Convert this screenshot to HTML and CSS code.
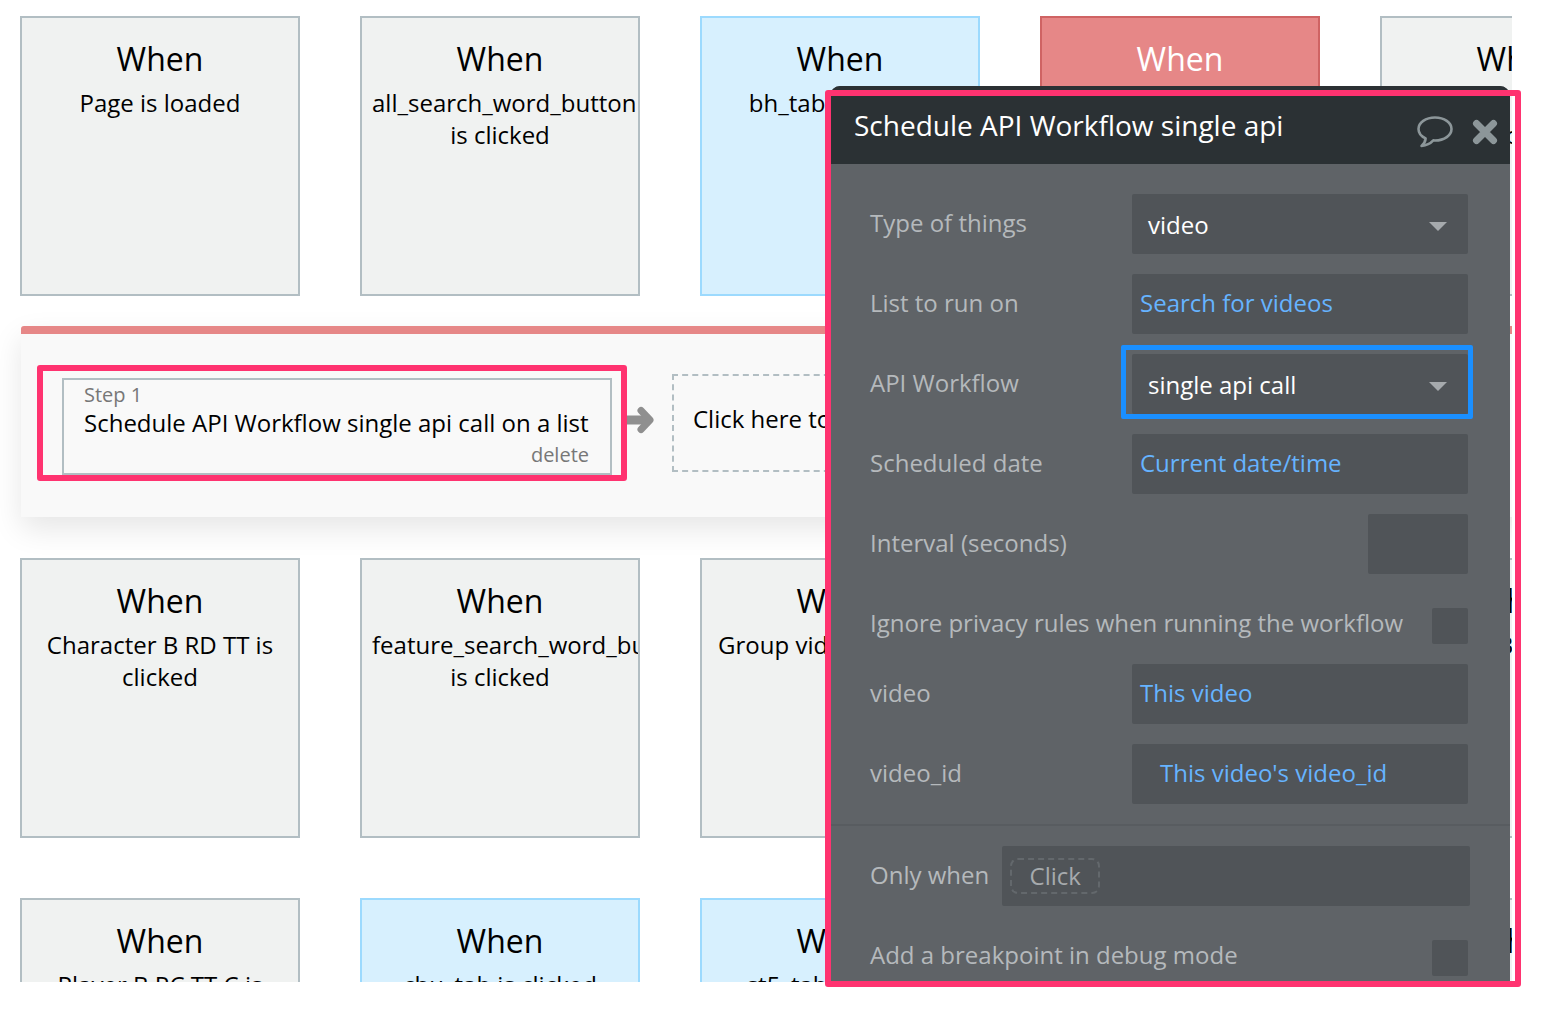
FILE: index.html
```html
<!DOCTYPE html>
<html lang="en">
<head>
<meta charset="utf-8">
<title>Workflow editor</title>
<link rel="stylesheet" href="styles.css">
</head>
<body>
<main class="canvas">
  <section class="row row-first">
    <article class="card"><h2>When</h2><p>Page is loaded</p></article>
    <article class="card"><h2>When</h2><p>all_search_word_button is clicked</p></article>
    <article class="card card-blue"><h2>When</h2><p>bh_tab is clicked</p></article>
    <article class="card card-red"><h2>When</h2><p>big_tab is clicked</p></article>
    <article class="card"><h2>When</h2><p>Button search is clicked</p></article>
  </section>

  <section class="steps">
    <div class="step">
      <span class="step-num">Step 1</span>
      <span class="step-title">Schedule API Workflow single api call on a list</span>
      <span class="step-delete">delete</span>
      <div class="mark-pink"></div>
    </div>
    <svg class="arrow" width="28" height="30" viewBox="0 0 28 30"><path d="M1 15H22" fill="none" stroke="#8f8f8f" stroke-width="9"/><path d="M15 5.500L24 15L15 24.500" fill="none" stroke="#8f8f8f" stroke-width="7" stroke-linejoin="round" stroke-linecap="round"/></svg>
    <div class="step-add">Click here to add an action...</div>
  </section>

  <section class="row row-second">
    <article class="card"><h2>When</h2><p>Character B RD TT is clicked</p></article>
    <article class="card"><h2>When</h2><p>feature_search_word_button is clicked</p></article>
    <article class="card"><h2>When</h2><p>Group video is clicked</p></article>
    <article class="card"><h2>When</h2><p>Input is changed</p></article>
    <article class="card"><h2>When</h2><p>Image B is shown when clicked</p></article>
  </section>

  <section class="row row-third">
    <article class="card"><h2>When</h2><p>Player B RC TT C is clicked</p></article>
    <article class="card card-blue"><h2>When</h2><p>chu_tab is clicked</p></article>
    <article class="card card-blue"><h2>When</h2><p>st5_tab is clicked</p></article>
    <article class="card"><h2>When</h2><p>Input is changed</p></article>
    <article class="card"><h2>When</h2><p>Button back is clicked</p></article>
  </section>

  <aside class="editor">
    <header class="editor-head">
      <h1>Schedule API Workflow single api</h1>
      <svg class="icon-chat" width="38" height="34" viewBox="0 0 38 34"><path d="M19 2.5C9.6 2.5 2.5 7.7 2.5 14C2.5 18 5.3 21.4 9.6 23.4C9.5 26 8.2 28.6 5.5 31C10.500 30.500 14.500 28.500 17.300 25.400C18 25.500 18.500 25.500 19 25.500C28.400 25.500 35.500 20.300 35.500 14C35.500 7.700 28.400 2.500 19 2.500Z" fill="none" stroke="#8c9699" stroke-width="2.600" stroke-linejoin="round"/></svg>
      <svg class="icon-close" width="26" height="26" viewBox="0 0 26 26"><path d="M4.500 4.500L21.500 21.500M21.500 4.500L4.500 21.500" fill="none" stroke="#8c9699" stroke-width="7" stroke-linecap="round"/></svg>
    </header>
    <div class="editor-body">
      <div class="field"><label>Type of things</label><div class="control control-select">video<i class="caret"></i></div></div>
      <div class="field"><label>List to run on</label><div class="control control-link">Search for videos</div></div>
      <div class="field"><label>API Workflow</label><div class="control control-select">single api call<i class="caret"></i><div class="mark-blue"></div></div></div>
      <div class="field"><label>Scheduled date</label><div class="control control-link">Current date/time</div></div>
      <div class="field"><label>Interval (seconds)</label><div class="control control-short"></div></div>
      <div class="field field-check"><label>Ignore privacy rules when running the workflow</label><div class="check"></div></div>
      <div class="field"><label>video</label><div class="control control-link">This video</div></div>
      <div class="field"><label>video_id</label><div class="control control-link control-indent">This video's video_id</div></div>
      <hr class="divider">
      <div class="field field-when"><label>Only when</label><div class="control control-when"><span class="click-chip">Click</span></div></div>
      <div class="field field-break"><label>Add a breakpoint in debug mode</label><div class="check"></div></div>
    </div>
  </aside>
</main>
<div class="mark-editor"></div>
</body>
</html>
```

FILE: styles.css
```css
* { box-sizing: border-box; }
html, body { margin: 0; padding: 0; background: #fff; }
body { position: relative; width: 1562px; height: 1028px; overflow: hidden; font-family: "Open Sans", "Noto Sans", sans-serif; color: #000; }

.canvas { position: relative; width: 1512px; height: 982px; overflow: hidden; background: #fff; }

.row { display: flex; gap: 60px; padding-left: 20px; width: 1800px; }
.row-first { margin-top: 16px; }
.row-second { margin-top: 41px; }
.row-third { margin-top: 60px; }

.card { flex: 0 0 280px; height: 280px; border: 2px solid #b2bec3; background: #f0f2f1; padding: 0 10px; text-align: center; overflow: hidden; }
.card h2 { margin: 19px 0 0; font-size: 32px; line-height: 44px; font-weight: 400; }
.card p { margin: 6px 0 0; font-size: 24px; line-height: 32px; }
.card-blue { background: #d7f0fe; border-color: #9cdafe; }
.card-red { background: #e68787; border-color: #cf6363; color: #fff; }

.steps { position: relative; z-index: 1; margin: 30px 0 0 21px; width: 1600px; height: 191px; background: #f9f9f9; border-top: 8px solid #e68787; box-shadow: 0 12px 30px rgba(0,0,0,.1); display: flex; align-items: flex-start; padding: 40px 0 0 41px; border-radius: 3px 0 0 0; }

.step { position: relative; flex: 0 0 550px; height: 97px; margin-top: 4px; border: 2px solid #b2bec3; padding: 2px 21px 0 20px; display: flex; flex-direction: column; }
.step-num { font-size: 20px; line-height: 26px; color: #777; }
.step-title { font-size: 24px; line-height: 32px; white-space: nowrap; margin-top: -1px; }
.step-delete { font-size: 20px; line-height: 28px; color: #777; text-align: right; margin-top: 2px; }
.mark-pink { position: absolute; left: -27px; top: -15px; width: 590px; height: 116px; border: 6px solid #ff3370; border-radius: 3px; }

.arrow { margin: 31px 0 0 14px; flex: none; }
.step-add { flex: 0 0 340px; height: 98px; margin-left: 18px; border: 2px dashed #b2bec3; padding-left: 19px; font-size: 24px; line-height: 86px; white-space: nowrap; overflow: hidden; }

.editor { position: absolute; z-index: 2; left: 830px; top: 86px; width: 680px; height: 896px; background: #5f6367; border-radius: 10px 10px 0 0; overflow: hidden; }
.editor-head { height: 78px; padding: 0 12px 0 24px; background: #2b3134; display: flex; align-items: center; }
.editor-head h1 { flex: 1; margin: 0; font-size: 28px; line-height: 38px; font-weight: 400; color: #fff; white-space: nowrap; }
.icon-chat { margin-right: 18px; margin-top: 14px; flex: none; }
.icon-close { flex: none; margin-top: 13px; }

.editor-body { padding: 30px 42px 0 40px; display: flex; flex-direction: column; gap: 20px; }
.field { display: flex; align-items: center; justify-content: space-between; height: 60px; }
.field label { font-size: 24px; line-height: 32px; color: #b5b9bc; white-space: nowrap; margin-top: -2px; }
.control { position: relative; width: 336px; height: 60px; background: #505458; border-radius: 2px; display: flex; align-items: center; font-size: 24px; color: #fff; padding-left: 16px; }
.control-link { color: #66b3ff; padding-left: 8px; line-height: 58px; align-items: flex-start; }
.control-indent { padding-left: 28px; }
.control-short { width: 100px; }
.caret { position: absolute; right: 21px; top: 28px; width: 0; height: 0; border-left: 9px solid transparent; border-right: 9px solid transparent; border-top: 9px solid #a6aaad; }
.mark-blue { position: absolute; left: -11px; top: -9px; width: 352px; height: 74px; border: 5px solid #1a8fff; border-radius: 2px; }

.field-check { height: 36px; margin-top: 14px; }
.field-check label { margin-top: -6px; }
.check { flex: none; width: 36px; height: 36px; background: #505458; border-radius: 2px; }

.divider { border: 0; height: 2px; margin: 0 -42px 0 -40px; background: #585c60; }
.field-when { justify-content: flex-start; gap: 13px; margin-right: -2px; }
.field-when label { margin-top: -2px; }
.control-when { flex: 1; width: auto; padding-left: 8px; }
.click-chip { width: 90px; height: 36px; border: 2px dashed #63686c; border-radius: 8px; font-size: 24px; color: #a6aaad; text-align: center; line-height: 31px; }
.field-break { height: 36px; margin-top: 14px; }
.field-break label { margin-top: -6px; }

.mark-editor { position: absolute; z-index: 3; left: 825px; top: 90px; width: 696px; height: 897px; border: 6px solid #ff3370; border-radius: 3px; }
```
